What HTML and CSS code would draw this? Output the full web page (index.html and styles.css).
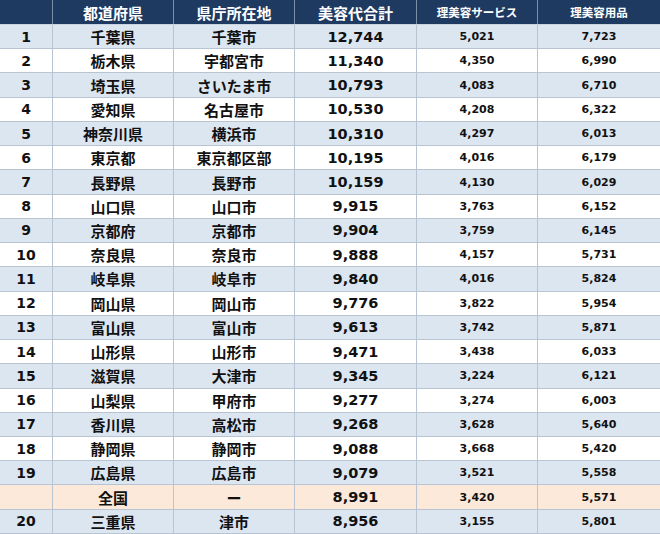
FILE: index.html
```html
<!DOCTYPE html>
<html lang="ja">
<head>
<meta charset="utf-8">
<link rel="stylesheet" href="styles.css">
</head>
<body>
<div class="tbl">
  <div class="row head">
    <div class="c"></div>
    <div class="c jp">都道府県</div>
    <div class="c jp">県庁所在地</div>
    <div class="c jp">美容代合計</div>
    <div class="c jp sm">理美容サービス</div>
    <div class="c jp sm">理美容用品</div>
  </div>
  <div class="row odd"><div class="c n">1</div><div class="c jp">千葉県</div><div class="c jp">千葉市</div><div class="c big">12,744</div><div class="c num">5,021</div><div class="c num">7,723</div></div>
  <div class="row"><div class="c n">2</div><div class="c jp">栃木県</div><div class="c jp">宇都宮市</div><div class="c big">11,340</div><div class="c num">4,350</div><div class="c num">6,990</div></div>
  <div class="row odd"><div class="c n">3</div><div class="c jp">埼玉県</div><div class="c jp">さいたま市</div><div class="c big">10,793</div><div class="c num">4,083</div><div class="c num">6,710</div></div>
  <div class="row"><div class="c n">4</div><div class="c jp">愛知県</div><div class="c jp">名古屋市</div><div class="c big">10,530</div><div class="c num">4,208</div><div class="c num">6,322</div></div>
  <div class="row odd"><div class="c n">5</div><div class="c jp">神奈川県</div><div class="c jp">横浜市</div><div class="c big">10,310</div><div class="c num">4,297</div><div class="c num">6,013</div></div>
  <div class="row"><div class="c n">6</div><div class="c jp">東京都</div><div class="c jp">東京都区部</div><div class="c big">10,195</div><div class="c num">4,016</div><div class="c num">6,179</div></div>
  <div class="row odd"><div class="c n">7</div><div class="c jp">長野県</div><div class="c jp">長野市</div><div class="c big">10,159</div><div class="c num">4,130</div><div class="c num">6,029</div></div>
  <div class="row"><div class="c n">8</div><div class="c jp">山口県</div><div class="c jp">山口市</div><div class="c big">9,915</div><div class="c num">3,763</div><div class="c num">6,152</div></div>
  <div class="row odd"><div class="c n">9</div><div class="c jp">京都府</div><div class="c jp">京都市</div><div class="c big">9,904</div><div class="c num">3,759</div><div class="c num">6,145</div></div>
  <div class="row"><div class="c n">10</div><div class="c jp">奈良県</div><div class="c jp">奈良市</div><div class="c big">9,888</div><div class="c num">4,157</div><div class="c num">5,731</div></div>
  <div class="row odd"><div class="c n">11</div><div class="c jp">岐阜県</div><div class="c jp">岐阜市</div><div class="c big">9,840</div><div class="c num">4,016</div><div class="c num">5,824</div></div>
  <div class="row"><div class="c n">12</div><div class="c jp">岡山県</div><div class="c jp">岡山市</div><div class="c big">9,776</div><div class="c num">3,822</div><div class="c num">5,954</div></div>
  <div class="row odd"><div class="c n">13</div><div class="c jp">富山県</div><div class="c jp">富山市</div><div class="c big">9,613</div><div class="c num">3,742</div><div class="c num">5,871</div></div>
  <div class="row"><div class="c n">14</div><div class="c jp">山形県</div><div class="c jp">山形市</div><div class="c big">9,471</div><div class="c num">3,438</div><div class="c num">6,033</div></div>
  <div class="row odd"><div class="c n">15</div><div class="c jp">滋賀県</div><div class="c jp">大津市</div><div class="c big">9,345</div><div class="c num">3,224</div><div class="c num">6,121</div></div>
  <div class="row"><div class="c n">16</div><div class="c jp">山梨県</div><div class="c jp">甲府市</div><div class="c big">9,277</div><div class="c num">3,274</div><div class="c num">6,003</div></div>
  <div class="row odd"><div class="c n">17</div><div class="c jp">香川県</div><div class="c jp">高松市</div><div class="c big">9,268</div><div class="c num">3,628</div><div class="c num">5,640</div></div>
  <div class="row"><div class="c n">18</div><div class="c jp">静岡県</div><div class="c jp">静岡市</div><div class="c big">9,088</div><div class="c num">3,668</div><div class="c num">5,420</div></div>
  <div class="row odd"><div class="c n">19</div><div class="c jp">広島県</div><div class="c jp">広島市</div><div class="c big">9,079</div><div class="c num">3,521</div><div class="c num">5,558</div></div>
  <div class="row nat"><div class="c n"></div><div class="c jp">全国</div><div class="c jp">ー</div><div class="c big">8,991</div><div class="c num">3,420</div><div class="c num">5,571</div></div>
  <div class="row odd"><div class="c n">20</div><div class="c jp">三重県</div><div class="c jp">津市</div><div class="c big">8,956</div><div class="c num">3,155</div><div class="c num">5,801</div></div>
</div>
</body>
</html>
```
FILE: styles.css
```css
html, body {
  margin: 0;
  padding: 0;
  background: #ffffff;
}
.tbl {
  width: 660px;
  height: 534px;
  display: flex;
  flex-direction: column;
  font-family: "DejaVu Sans", "Noto Sans CJK JP", sans-serif;
  font-weight: bold;
  color: #111111;
}
.row {
  flex: 1 1 0;
  display: grid;
  grid-template-columns: 53px 121px 121px 122px 121px 122px;
  border-bottom: 1px solid #b9c4d3;
  background: #ffffff;
}
.row.odd {
  background: #dce6f1;
}
.row.nat {
  background: #fde9d9;
}
.row.head {
  flex: 0 0 24px;
  background: #1f3a60;
  color: #ffffff;
  border-bottom: 1px solid #c9d3e0;
}
.c {
  display: flex;
  align-items: center;
  justify-content: center;
  border-right: 1px solid #b9c4d3;
  white-space: nowrap;
}
.c:last-child {
  border-right: none;
}
.head .c {
  border-right: 1px solid #7d8fa8;
}
.head .c:last-child {
  border-right: none;
}
.jp {
  font-family: "Noto Sans CJK JP", sans-serif;
  font-size: 15px;
}
.head .jp.sm {
  font-size: 11.5px;
}
.n {
  font-size: 14px;
}
.big {
  font-size: 14.5px;
}
.num {
  font-size: 11px;
}
```
